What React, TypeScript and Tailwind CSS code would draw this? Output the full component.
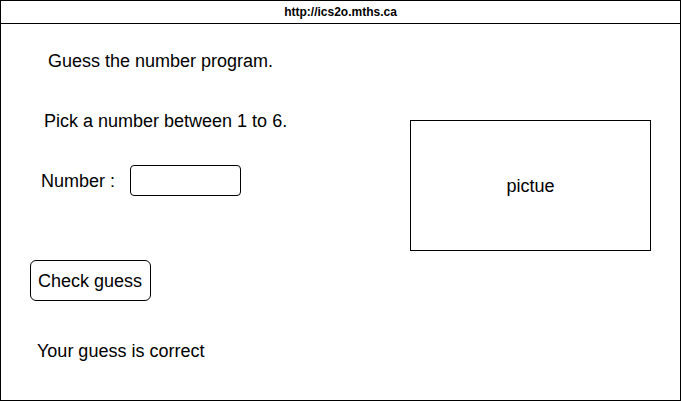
export default function App() {
  return (
    <div
      className="w-[681px] h-[401px] border border-black bg-white text-black flex flex-col"
      style={{ fontFamily: '"Liberation Sans", Arial, sans-serif' }}
    >
      <div className="h-[23px] border-b border-black flex items-center justify-center text-[12px] font-bold leading-[22px] shrink-0">
        http://ics2o.mths.ca
      </div>
      <div className="flex flex-row flex-1">
        <div className="w-[409px] flex flex-col text-[18px] leading-[20px]">
          <div className="mt-[27px] ml-[47px]">Guess the number program.</div>
          <div className="mt-[40px] ml-[43px]">Pick a number between 1 to 6.</div>
          <div className="mt-[34px] ml-[40px] flex flex-row items-center">
            <span>Number :</span>
            <div className="ml-[15px] w-[111px] h-[31px] border border-black rounded-[4px]" />
          </div>
          <div className="mt-[64px] ml-[29px]">
            <div className="w-[121px] h-[41px] border border-black rounded-[6px] flex items-center justify-center pr-[1px]">
              Check guess
            </div>
          </div>
          <div className="mt-[40px] ml-[36px]">Your guess is correct</div>
        </div>
        <div className="mt-[96px] w-[241px] h-[131px] border border-black flex items-center justify-center text-[18px] leading-[20px]">
          pictue
        </div>
      </div>
    </div>
  );
}
